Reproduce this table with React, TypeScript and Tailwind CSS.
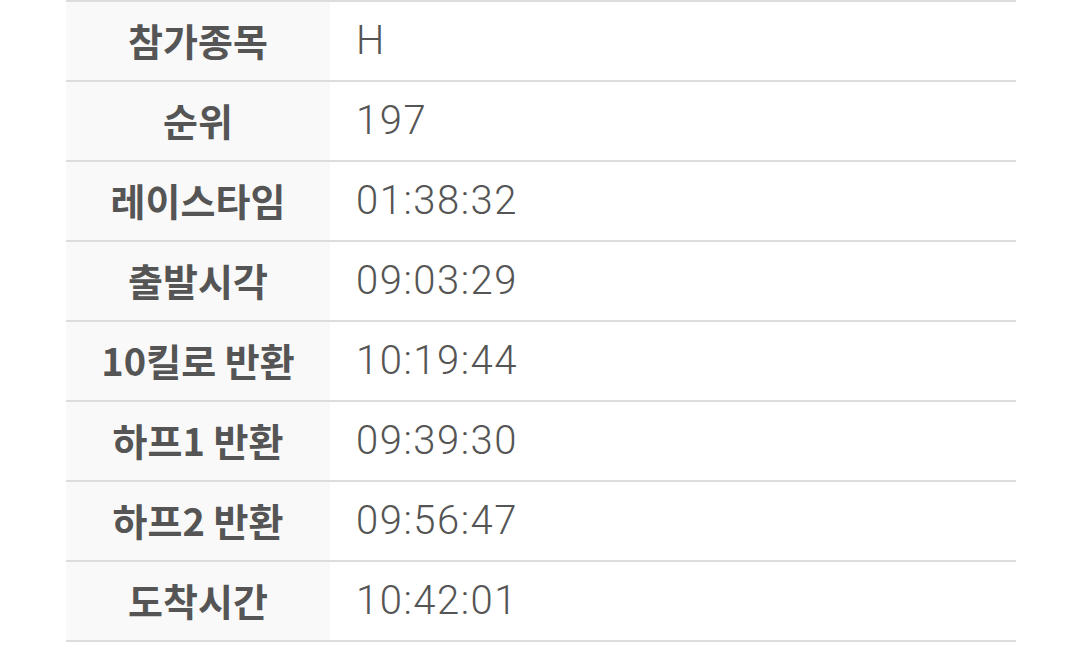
import React from "react";

const rows: [string, string][] = [
  ["참가종목", "H"],
  ["순위", "197"],
  ["레이스타임", "01:38:32"],
  ["출발시각", "09:03:29"],
  ["10킬로 반환", "10:19:44"],
  ["하프1 반환", "09:39:30"],
  ["하프2 반환", "09:56:47"],
  ["도착시간", "10:42:01"],
];

export default function App() {
  return (
    <div className="w-[1080px] h-[658px] bg-white overflow-hidden">
      <div className="ml-[66px] w-[950px] border-t-2 border-[#dddddd]">
        {rows.map(([k, v]) => (
          <div key={k} className="flex h-[80px] border-b-2 border-[#dddddd]">
            <div
              className="w-[264px] bg-[#f9f9f9] flex items-center justify-center text-[38px] leading-none font-bold text-[#555555] pb-[3px]"
              style={{ fontFamily: '"Noto Sans CJK KR", "Noto Sans", sans-serif' }}
            >
              {k}
            </div>
            <div
              className="flex-1 flex items-center pl-[26px] text-[40px] leading-none font-light tracking-[1.5px] text-[#555555]"
              style={{ fontFamily: 'Roboto, "Noto Sans CJK KR", sans-serif' }}
            >
              {v}
            </div>
          </div>
        ))}
      </div>
    </div>
  );
}
